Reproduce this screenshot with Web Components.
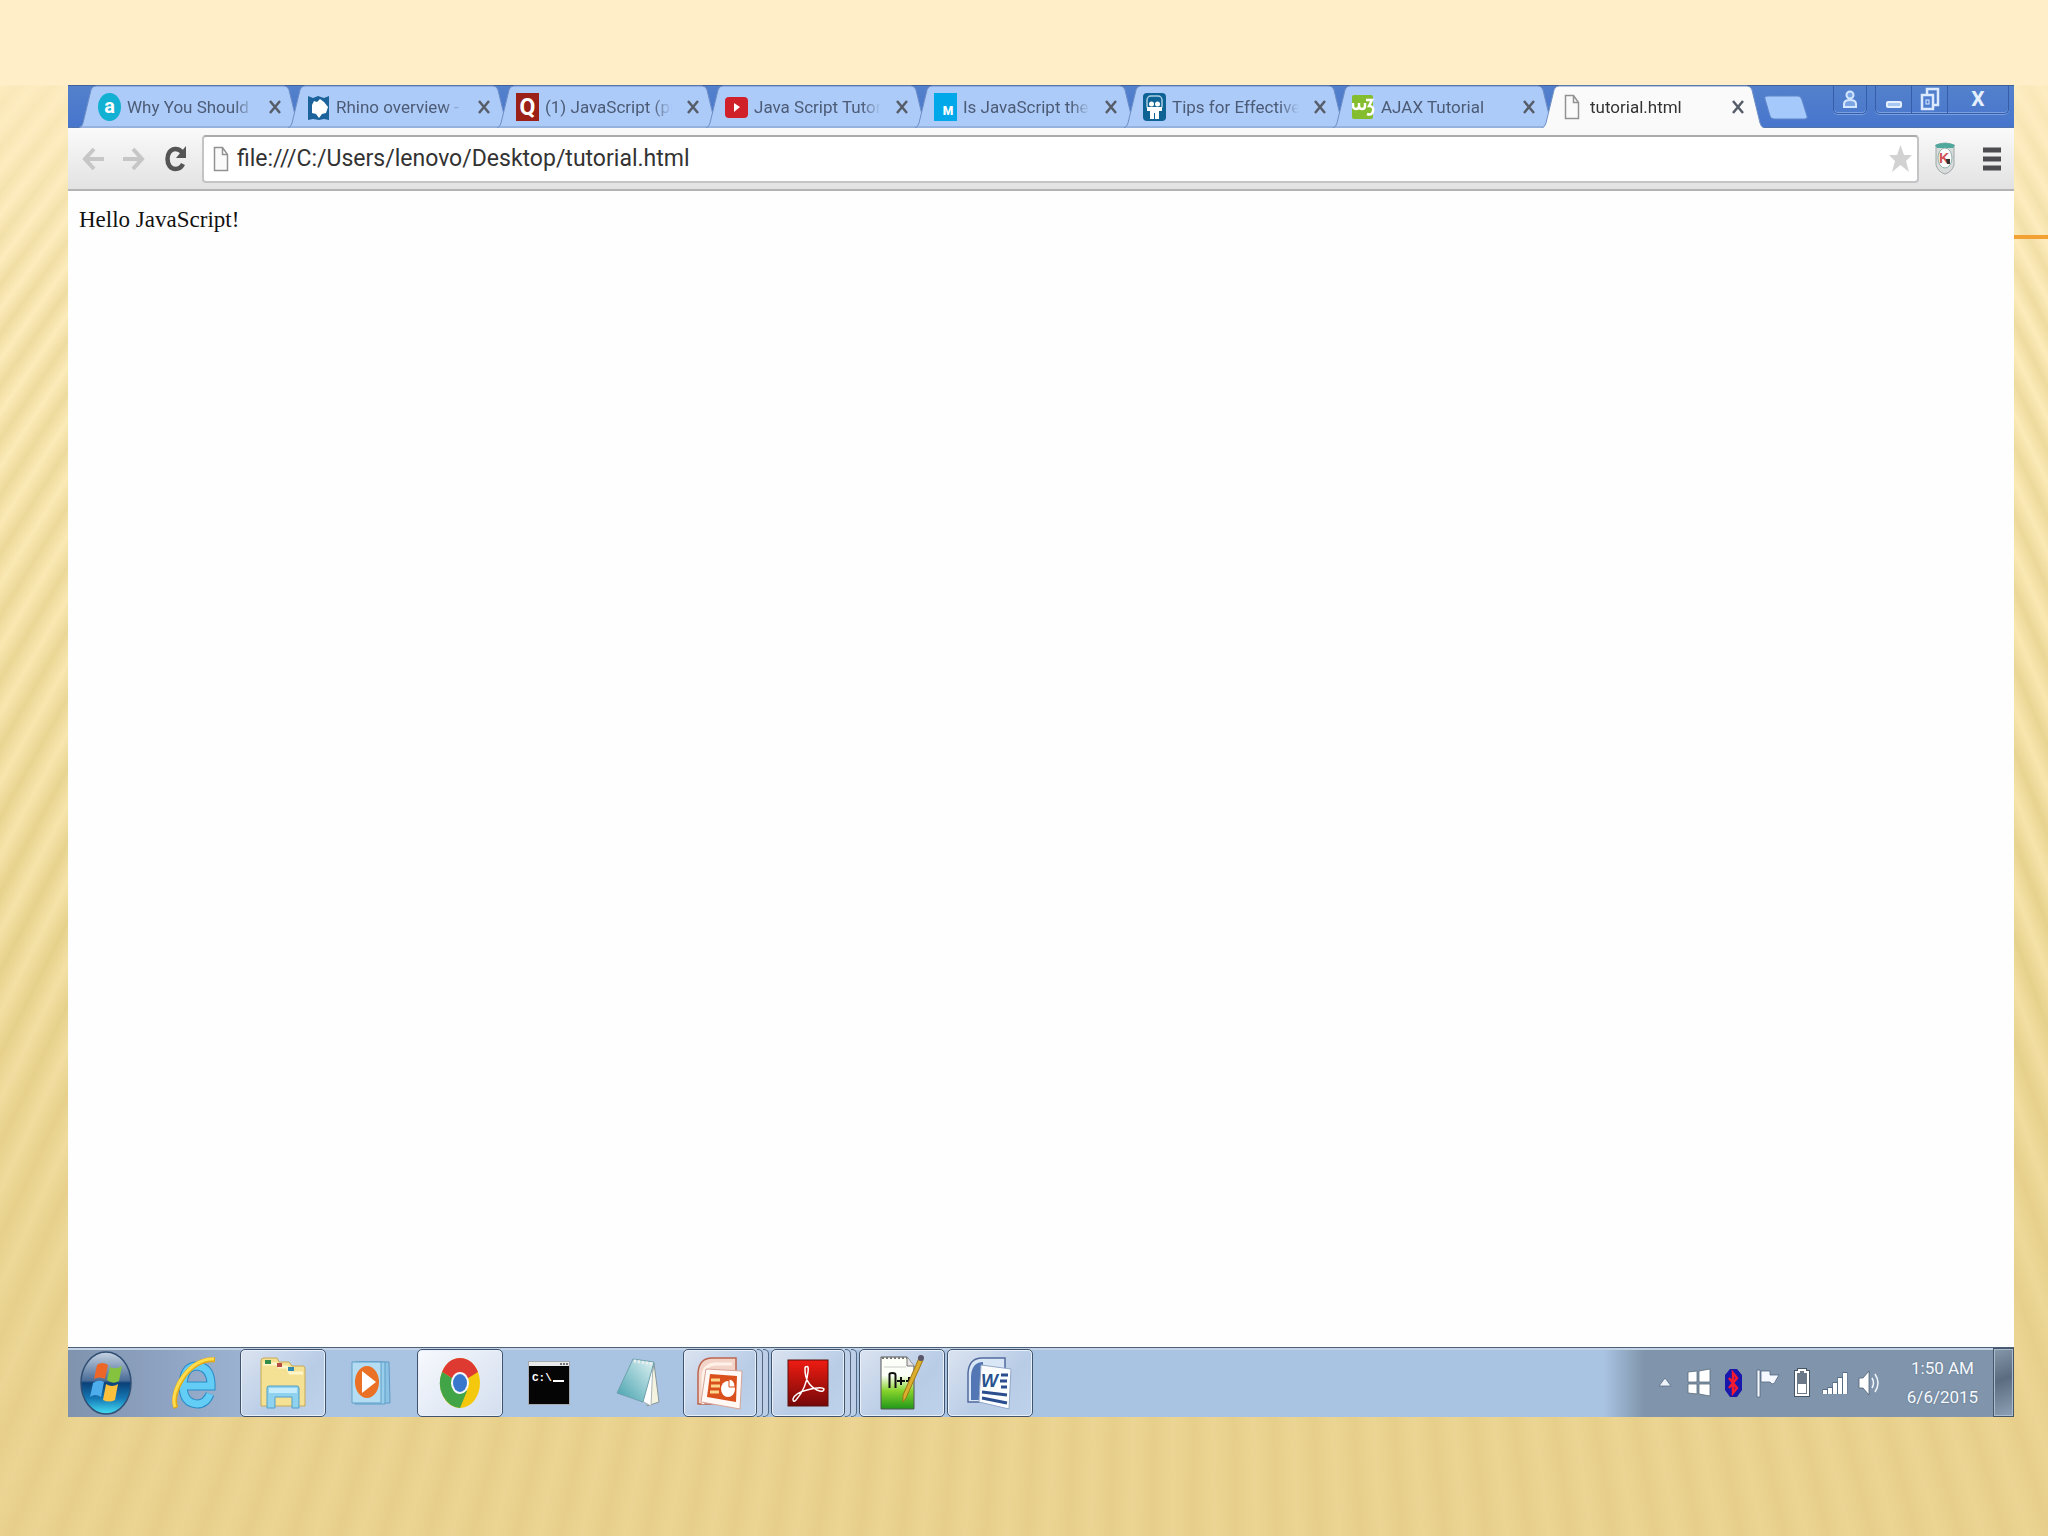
<!DOCTYPE html>
<html lang="en">
<head>
<meta charset="utf-8">
<title>tutorial.html</title>
<style>
  body {
    margin: 0;
    font-family: Roboto, "Liberation Sans", sans-serif;
  }
</style>
</head>
<body>
<slide-page>
  <browser-window>
    <browser-tab slot="tabs" icon="about">Why You Should</browser-tab>
    <browser-tab slot="tabs" icon="rhino">Rhino overview -</browser-tab>
    <browser-tab slot="tabs" icon="quora">(1) JavaScript (pro</browser-tab>
    <browser-tab slot="tabs" icon="youtube">Java Script Tutoria</browser-tab>
    <browser-tab slot="tabs" icon="medium">Is JavaScript the F</browser-tab>
    <browser-tab slot="tabs" icon="slideshare">Tips for Effective</browser-tab>
    <browser-tab slot="tabs" icon="w3">AJAX Tutorial</browser-tab>
    <browser-tab slot="tabs" icon="page" active>tutorial.html</browser-tab>
    Hello JavaScript!
  </browser-window>
  <task-bar>
    <task-item icon="ie" label="Internet Explorer"></task-item>
    <task-item icon="explorer" label="Windows Explorer" running></task-item>
    <task-item icon="player" label="Media Player"></task-item>
    <task-item icon="chrome" label="Chrome" running></task-item>
    <task-item icon="cmd" label="Command Prompt"></task-item>
    <task-item icon="notepad" label="Notepad"></task-item>
    <task-item icon="powerpoint" label="PowerPoint" running stacked></task-item>
    <task-item icon="reader" label="Reader" running stacked></task-item>
    <task-item icon="npp" label="Notepad++" running></task-item>
    <task-item icon="word" label="Word" running></task-item>
    <app-icon slot="tray" name="chevron"></app-icon>
    <app-icon slot="tray" name="windows"></app-icon>
    <app-icon slot="tray" name="bluetooth"></app-icon>
    <app-icon slot="tray" name="flag"></app-icon>
    <app-icon slot="tray" name="battery"></app-icon>
    <app-icon slot="tray" name="signal"></app-icon>
    <app-icon slot="tray" name="speaker"></app-icon>
  </task-bar>
</slide-page>

<script>
// name: [width, height, markup]
const ICONS = {
  about: [23, 28, `
    <ellipse cx="11.5" cy="14" rx="11.5" ry="14" fill="#12b0d2"/>
    <text x="11.5" y="20" text-anchor="middle" font-size="20" font-weight="700" fill="#fff">a</text>`],
  rhino: [23, 28, `
    <path d="M1 3l5 2 5-2 6 2 5-2v24l-5-1-5 1-6-1-5 1z" fill="#1c639c"/>
    <path d="M5 12l2-4 3 1 3-3 4 3 4 5-2 6-4 1-3 4-3-4-4-1z" fill="#fff"/>`],
  quora: [23, 28, `
    <rect width="23" height="28" fill="#9b2118"/>
    <text x="11.5" y="22" text-anchor="middle" font-size="23" font-weight="700" fill="#fff">Q</text>`],
  youtube: [23, 28, `
    <rect y="4" width="23" height="21" rx="4" fill="#d0202a"/>
    <path d="M9 10l6 4-6 5z" fill="#fff"/>`],
  medium: [23, 28, `
    <rect width="23" height="28" fill="#00a8ea"/>
    <text x="14" y="22" text-anchor="middle" font-size="12" font-weight="900" fill="#fff">M</text>`],
  slideshare: [23, 28, `
    <rect width="23" height="28" rx="4" fill="#0d6394"/>
    <rect x="4" y="3" width="15" height="14" rx="4" fill="none" stroke="#a9cfe4" stroke-width="1.5"/>
    <circle cx="8.5" cy="11" r="2.5" fill="#fff"/><circle cx="14.5" cy="11" r="2.5" fill="#fff"/>
    <path d="M4 14h15v4h-3v8h-4v-6h-1v6H7v-8H4z" fill="#fff"/>`],
  w3: [23, 28, `
    <rect y="2" width="21" height="24" rx="2" fill="#84bd2e"/>
    <path d="M1 10v3q0 3 3 3t3-3v-3 3q0 3 3 3t3-3v-3M14 7h6l-3 6q5 0 4 5t-6 3" fill="none" stroke="#fff" stroke-width="2.5"/>`],
  page: [23, 28, `
    <path d="M4.500 2.500h8l5 7v16h-13zM12.500 2.500v7h5" fill="#fafafa" stroke="#929292" stroke-width="1.5"/>`],
  back: [22, 24, `<path d="M12 2L3 12l9 10M3 12h19" fill="none" stroke="#c6c6c6" stroke-width="4"/>`],
  forward: [22, 24, `<path d="M10 2l9 10-9 10M19 12H0" fill="none" stroke="#c6c6c6" stroke-width="4"/>`],
  reload: [24, 28, `
    <path d="M18.500 7.500Q15.500 4 11.500 4C6.500 4 3.500 8.500 3.500 14s3 10 8 10q5 0 7.500-5" fill="none" stroke="#555" stroke-width="4.5"/>
    <path d="M22 1v12H12z" fill="#555"/>`],
  star: [25, 30, `<path d="M12.500 1l3.500 10h8l-6 6 3 11-8.500-7L4 28l3-11-6-6h8z" fill="#d2d2d2"/>`],
  shield: [22, 33, `
    <path d="M2 3q9-4 18 0v20q-2 7-9 9-7-2-9-9z" fill="#dadcdc" stroke="#9da7a7"/>
    <path d="M1 3q10-4 20 0l-2 3H3z" fill="#4ea99c"/>
    <ellipse cx="11" cy="16" rx="7" ry="10" fill="#fafafa" stroke="#8fb2ad"/>
    <text x="10" y="21" text-anchor="middle" font-size="14" font-weight="700" fill="#d05053">K</text>
    <path d="M12 17h4v5h-3z" fill="#333"/>`],
  menu: [20, 24, `<path d="M1 3h18M1 12h18M1 21h18" stroke="#4c4c50" stroke-width="5"/>`],
  user: [16, 19, `
    <circle cx="8" cy="5" r="3.5" fill="#7ba4e4" stroke="#d5e7ff" stroke-width="2"/>
    <path d="M2 17v-3q0-4 6-4t6 4v3z" fill="#7ba4e4" stroke="#d5e7ff" stroke-width="2"/>`],
  minimize: [18, 19, `<rect x="2" y="12" width="14" height="5" rx="1" fill="#a8c8f4" stroke="#e3efff" stroke-width="2"/>`],
  restore: [20, 24, `
    <path d="M7 7V2h11v16h-5" fill="none" stroke="#dceaff" stroke-width="2.5"/>
    <rect x="2" y="8" width="11" height="14" fill="#4f7fd0" stroke="#dceaff" stroke-width="2.5"/>
    <rect x="6" y="13" width="3" height="4" fill="none" stroke="#dceaff"/>`],
  start: [52, 64, `
    <defs>
      <linearGradient id="orb" x2="0" y2="1"><stop stop-color="#c7d3e2"/><stop offset=".46" stop-color="#4a6c97"/><stop offset=".5" stop-color="#0b4178"/><stop offset=".75" stop-color="#1579b6"/><stop offset="1" stop-color="#45e0f6"/></linearGradient>
    </defs>
    <ellipse cx="26" cy="32" rx="25" ry="31" fill="url(#orb)" stroke="#304f73" stroke-width="1.5"/>
    <path d="M17 14q5-4 11 0l-3 14q-6-3-11 0z" fill="#ec6628"/>
    <path d="M30 16q6 3 12-1l-3 15q-6 4-12-1z" fill="#85c33e"/>
    <path d="M13 32q6-4 11-1l-3 15q-6-4-11 0z" fill="#4cacec"/>
    <path d="M26 33q6 4 12 0l-3 16q-6 3-12 0z" fill="#fbc13d"/>`],
  ie: [46, 56, `
    <path d="M38 39Q34 49 25 49 11 48 11 30 12 11 25 11 38 12 39 28L39 31H14" fill="none" stroke="#288bc7" stroke-width="9"/>
    <path d="M38 39Q34 49 25 49 11 48 11 30 12 11 25 11 38 12 39 28L39 31H14" fill="none" stroke="#64cdf5" stroke-width="7"/>
    <path d="M4 53C-3 38 17 2 43 5" fill="none" stroke="#e3aa17" stroke-width="5"/>
    <path d="M3 52C-3 36 18 2 42 4" fill="none" stroke="#ffdc4c" stroke-width="3"/>`],
  explorer: [46, 52, `
    <path d="M1 49V4q0-3 3-3h13l2 4h10l3 4h11q2 0 2 3v37z" fill="#f4e193" stroke="#c8a956"/>
    <path d="M3 7h14l2 3h8l3 6h13" fill="none" stroke="#fff5ca" stroke-width="3"/>
    <path d="M5 3h6v4H5z" fill="#358c48"/><path d="M17 6h5v4h-5z" fill="#b54b44"/><path d="M28 10h6v4h-6z" fill="#2f8aad"/>
    <path d="M7 51V31q0-2 2-2h28q2 0 2 2v20h-7V40H15v11z" fill="#8ed2ef" stroke="#519fc7"/>
    <path d="M9 31h28v5H9z" fill="#c4ecfa"/>`],
  player: [42, 48, `
    <path d="M8 3h30l1 41H8z" fill="#8cc3e5" stroke="#6099c4"/>
    <path d="M4 3h30v42H4z" fill="#98cdec" stroke="#5f9fc7"/>
    <path d="M1 3h29v41H1z" fill="#b4dcf2" stroke="#5f9fc7"/>
    <ellipse cx="16" cy="23" rx="12" ry="16" fill="#ea7025"/>
    <path d="M11 12l14 11-14 11z" fill="#fff"/>`],
  chrome: [42, 52, `
    <ellipse cx="21" cy="26" rx="20" ry="25" fill="#f4c80d"/>
    <path d="M21 26L3 15Q9 1 21 1t18 14z" fill="#df3a32"/>
    <path d="M21 26L3 15Q-2 28 4 39q6 11 17 12l7-17z" fill="#41a446"/>
    <ellipse cx="21" cy="26" rx="9" ry="11" fill="#f4f7fa"/>
    <ellipse cx="21" cy="26" rx="7" ry="9" fill="#3877cb"/>`],
  cmd: [42, 44, `
    <rect width="42" height="44" fill="#a6a9ad"/>
    <rect x="1" y="1" width="40" height="4" fill="#e9e9e9"/><path d="M32 3h8" stroke="#777" stroke-width="2" stroke-dasharray="2 1"/>
    <rect x="1" y="5" width="40" height="38" fill="#050505"/>
    <text x="4" y="20" font-family="Liberation Mono" font-size="11" font-weight="700" fill="#fff">C:\\</text>
    <path d="M25 20h11" stroke="#fff" stroke-width="2"/>`],
  notepad: [44, 50, `
    <defs><linearGradient id="note" x1="1" x2="0" y2="1"><stop stop-color="#e0f3f4"/><stop offset="1" stop-color="#429fac"/></linearGradient></defs>
    <path d="M38 5l5 39-12 4z" fill="#f4f3df" stroke="#87969a"/>
    <path d="M37 5l-2 43-9-5z" fill="#fff" stroke="#a9b7b9"/>
    <path d="M17 1l21 3-11 40L1 35z" fill="url(#note)" stroke="#6fa1ad"/>
    <path d="M18 3l19 3" stroke="#eee" stroke-width="3" stroke-dasharray="2 2"/>`],
  powerpoint: [46, 54, `
    <path d="M1 48V17Q2 2 15 2h24v46z" fill="#f3d4c8" stroke="#bc634d" stroke-width="1.5"/>
    <path d="M6 48V20Q7 8 19 8h16" fill="none" stroke="#fff1e8" stroke-width="3"/>
    <path d="M9 13l36 2-2 38-39-7z" fill="#fff8f4" stroke="#d6a598"/>
    <path d="M13 18l27 2-1 26-29-5z" fill="#d9501d"/>
    <path d="M14 24h9M14 30h9M13 36h9" stroke="#ffd48b" stroke-width="3"/>
    <ellipse cx="31" cy="33" rx="7" ry="8" fill="#fff"/><path d="M32 31v-8q6 1 6 8z" fill="#fff" stroke="#d9501d"/>`],
  reader: [42, 48, `
    <defs><linearGradient id="pdf" x2="0" y2="1"><stop stop-color="#ef1c12"/><stop offset="1" stop-color="#750808"/></linearGradient></defs>
    <rect x="1" y="1" width="40" height="46" fill="url(#pdf)" stroke="#57100d"/>
    <path d="M19 8q3-2 2 5c-1 10-4 19-12 28q-3 3-3-1 2-6 14-9 15-4 17-1 0 4-7 1-12-6-12-21 0-3 1-2z" fill="none" stroke="#fff" stroke-width="1.5"/>`],
  npp: [44, 56, `
    <defs><linearGradient id="npg" x2="0" y2="1"><stop offset=".35" stop-color="#fcfff7"/><stop offset=".65" stop-color="#87d32c"/><stop offset="1" stop-color="#209719"/></linearGradient></defs>
    <path d="M1 2h26l7 9v43H1z" fill="url(#npg)" stroke="#555"/>
    <path d="M2 3h25" stroke="#777" stroke-width="2" stroke-dasharray="2 2"/>
    <path d="M4 12h22" stroke="#ccc"/><path d="M27 2v9h7" fill="#e4e4e4" stroke="#777"/>
    <path d="M9.500 33V19q0-1 3-1t3 2v13M21 22v8M17 26h8M29 22v8M26 26h7" fill="none" stroke="#111" stroke-width="2"/>
    <path d="M39 3l4 2-17 38-3 4 0-7z" fill="#dcae2d" stroke="#9d7619"/>
    <circle cx="41" cy="3" r="3" fill="#59556b"/>`],
  word: [46, 54, `
    <path d="M1 46V17Q2 2 15 2h23v44z" fill="#d9e6f6" stroke="#526a9d" stroke-width="1.5"/>
    <path d="M4 44V20Q5 6 16 6v25l-4 13z" fill="#5377b4"/>
    <path d="M14 9l30 4-2 40-30-7z" fill="#fbfdff" stroke="#94a8c9"/>
    <text x="14" y="31" font-size="18" font-weight="700" font-style="italic" fill="#28518f">W</text>
    <path d="M34 19h7M33 25h7M34 31h6M15 36l25 3M15 42l25 5" stroke="#294d8d" stroke-width="3"/>`],
  chevron: [34, 32, `<path d="M11 19l6-8 6 8z" fill="#eef3f8" stroke="#566d88" stroke-width=".8"/>`],
  windows: [34, 32, `<path d="M6 5l9-1v11H6zM17 4l11-2v13H17zM6 17h9v10l-9-1zM17 17h11v12l-11-2z" fill="#fff" stroke="#59697c" stroke-width=".8"/>`],
  bluetooth: [34, 32, `
    <path d="M14 2h7l5 6v15l-5 7h-7l-5-7V8z" fill="#1818ac"/>
    <path d="M13 11l8 10-4 5V6l4 5-8 10" fill="none" stroke="#f31a31" stroke-width="2.5"/>`],
  flag: [34, 32, `
    <path d="M7 3h3v27H7z" fill="#f5f9ff" stroke="#50657d" stroke-width=".8"/>
    <path d="M11 4h9v4h9l-3 5q-1 4-4 4l-2-2h-9z" fill="#f5f9ff" stroke="#50657d" stroke-width=".8"/>`],
  battery: [34, 32, `
    <path d="M15 5V3h6v2h3v23H12V5z" fill="#6a7887" stroke="#465564" stroke-width="4"/>
    <path d="M15 5V3h6v2h3v23H12V5z" fill="#6a7887" stroke="#fff" stroke-width="2"/>
    <path d="M14 17h8v9h-8z" fill="#fff"/>`],
  signal: [34, 32, `<path d="M7 27v-5M12 27v-7M17 27V15M22 27V10M27 27V5" stroke="#576d85" stroke-width="5"/><path d="M7 27v-4M12 27v-6M17 27V16M22 27V11M27 27V6" stroke="#fff" stroke-width="4"/>`],
  speaker: [34, 32, `
    <path d="M7 11h4l6-7v24l-6-7H7z" fill="#fff" stroke="#4c6076" stroke-width=".8"/>
    <path d="M20 11q3 5 0 10M23 7q6 9 0 18" fill="none" stroke="#f0f6fc" stroke-width="1.5"/>`],
};

class AppIcon extends HTMLElement {
  connectedCallback() {
    const [width, height, markup] = ICONS[this.getAttribute('name')];
    this.attachShadow({ mode: 'open' }).innerHTML = `
      <style>
        :host { display: block; flex: none; }
        svg { display: block; }
      </style>
      <svg width="${width}" height="${height}" viewBox="0 0 ${width} ${height}" aria-hidden="true">${markup}</svg>
    `;
  }
}
customElements.define('app-icon', AppIcon);

class SlidePage extends HTMLElement {
  constructor() {
    super();
    this.attachShadow({ mode: 'open' }).innerHTML = `
      <style>
        :host {
          display: grid;
          grid-template-columns: 68px 1fr 34px;
          box-sizing: border-box;
          min-height: 100vh;
          padding: 85px 0 119px;
          background:
            linear-gradient(#ffeec8 85px, #fdecc0cc 86px, #fbe9b840 300px, #f0dc9a20 900px, #e8d08cb0 1400px),
            repeating-conic-gradient(from 90deg at 58% -1300px, #dfca8099 0deg, #ffeebc80 .42deg, #dfca8099 .84deg),
            linear-gradient(#ffeec8 85px, #fae8b4 450px, #edd896 950px, #e8d08c);
        }
        main {
          grid-column: 2;
          display: flex;
          flex-direction: column;
          min-width: 0;
        }
        hr {
          align-self: start;
          width: 100%;
          height: 4px;
          margin: 150px 0 0;
          border: 0;
          background: #f2a132;
        }
      </style>
      <main><slot></slot></main>
      <hr>
    `;
  }
}
customElements.define('slide-page', SlidePage);

class BrowserTab extends HTMLElement {
  connectedCallback() {
    const active = this.hasAttribute('active');
    this.attachShadow({ mode: 'open' }).innerHTML = `
      <style>
        :host {
          position: relative;
          display: flex;
          align-items: center;
          flex: 0 1 222px;
          box-sizing: border-box;
          min-width: 0;
          height: 43px;
          padding: 0 17px 0 19px;
          margin-right: -13px;
          color: #4c5b76;
          font-size: 17px;
          line-height: 24px;
        }
        :host([active]) { z-index: 1; color: #333; }
        .shape {
          position: absolute;
          inset: 0;
          width: 100%;
          height: 100%;
        }
        app-icon, .title, button { position: relative; }
        .title {
          flex: 1;
          min-width: 0;
          margin: 0 12px 0 6px;
          overflow: hidden;
          white-space: nowrap;
          -webkit-mask: linear-gradient(90deg, #000 85%, transparent);
          mask: linear-gradient(90deg, #000 85%, transparent);
        }
        button {
          flex: none;
          width: 18px;
          height: 24px;
          padding: 0;
          border: 0;
          background: none;
        }
        button svg { display: block; margin: auto; }
      </style>
      <svg class="shape" viewBox="0 0 222 43" preserveAspectRatio="none">
        <path d="M0 43Q3 42 4 38L12 5Q13 1 17 1H205Q209 1 210 5L218 38Q219 42 222 43z" fill="${active ? '#fafafb' : '#adcbf8'}"/>
        <path d="M0 43Q3 42 4 38L12 5Q13 1 17 1H205Q209 1 210 5L218 38Q219 42 222 43" fill="none" stroke="${active ? '#7292c4' : '#6e8fc6'}"/>
        ${active ? '' : '<path d="M1 42H221" stroke="#7f9ac6"/>'}
      </svg>
      <app-icon name="${this.getAttribute('icon')}"></app-icon>
      <span class="title"><slot></slot></span>
      <button aria-label="Close tab"><svg width="12" height="14" viewBox="0 0 12 14"><path d="M1 1l10 12M11 1L1 13" stroke="#565d69" stroke-width="2.5"/></svg></button>
    `;
  }
}
customElements.define('browser-tab', BrowserTab);

class BrowserWindow extends HTMLElement {
  constructor() {
    super();
    this.attachShadow({ mode: 'open' }).innerHTML = `
      <style>
        :host {
          display: flex;
          flex: 1;
          flex-direction: column;
          background: #fefefe;
        }
        button {
          display: flex;
          align-items: center;
          justify-content: center;
          padding: 0;
          border: 0;
          background: none;
        }
        .strip {
          display: flex;
          height: 43px;
          padding-left: 11px;
          background: linear-gradient(#5481cb, #4775cd);
          box-shadow: inset 0 1px #40609b, inset 0 -1px #5274ab;
        }
        .tabs { display: flex; flex: 0 1 1685px; min-width: 0; }
        .new {
          flex: none;
          width: 44px;
          height: 25px;
          margin-top: 10px;
        }
        .user, .controls {
          display: flex;
          flex: none;
          box-sizing: border-box;
          height: 29px;
          border: 1px solid #355da8;
          border-top: 0;
          border-radius: 0 0 5px 5px;
          box-shadow: inset 0 -1px #7ba0e2, 0 1px #7ba0e2;
        }
        .user { width: 34px; margin: 0 8px 0 auto; }
        .controls { margin-right: 5px; }
        .controls button { width: 36px; border-right: 1px solid #355da8; }
        .controls .close {
          width: 60px;
          border: 0;
          color: #e5f0ff;
          font: 700 21px Roboto, sans-serif;
        }
        .bar {
          display: flex;
          align-items: center;
          box-sizing: border-box;
          height: 63px;
          padding: 0 12px 0 14px;
          border-bottom: 2px solid #b3b3b5;
          background: linear-gradient(#fafafb, #e2e2e3);
        }
        .nav { display: flex; gap: 19px; margin-right: 14px; }
        .address {
          display: flex;
          align-items: center;
          flex: 1;
          box-sizing: border-box;
          height: 48px;
          padding: 0 4px 0 6px;
          border: 2px solid #c4c4c6;
          border-top-color: #aaaaac;
          border-radius: 4px;
          background: #fff;
        }
        input {
          flex: 1;
          min-width: 0;
          padding: 0;
          margin-left: 4px;
          border: 0;
          outline: 0;
          background: none;
          color: #333;
          font: 23px Roboto, "Liberation Sans", sans-serif;
        }
        .shield { margin-left: 15px; }
        .menu { margin-left: 26px; }
        article {
          flex: 1;
          padding: 14px 11px;
          color: #111;
          font: 23px/30px "Liberation Serif", serif;
        }
      </style>
      <div class="strip">
        <div class="tabs"><slot name="tabs"></slot></div>
        <button class="new" aria-label="New tab">
          <svg width="44" height="25"><path d="M4 1h30q3 0 4 4l5 16q1 3-2 3H10q-3 0-4-3L1 4q-1-3 3-3z" fill="#a5c9fa" stroke="#5e86cc"/></svg>
        </button>
        <button class="user" aria-label="User"><app-icon name="user"></app-icon></button>
        <div class="controls">
          <button aria-label="Minimize"><app-icon name="minimize"></app-icon></button>
          <button aria-label="Restore"><app-icon name="restore"></app-icon></button>
          <button class="close">X</button>
        </div>
      </div>
      <div class="bar">
        <div class="nav">
          <button aria-label="Back"><app-icon name="back"></app-icon></button>
          <button aria-label="Forward"><app-icon name="forward"></app-icon></button>
          <button aria-label="Reload"><app-icon name="reload"></app-icon></button>
        </div>
        <div class="address">
          <app-icon name="page"></app-icon>
          <input aria-label="Address" value="file:///C:/Users/lenovo/Desktop/tutorial.html">
          <button aria-label="Bookmark"><app-icon name="star"></app-icon></button>
        </div>
        <button class="shield" aria-label="Protection"><app-icon name="shield"></app-icon></button>
        <button class="menu" aria-label="Menu"><app-icon name="menu"></app-icon></button>
      </div>
      <article><slot></slot></article>
    `;
  }
}
customElements.define('browser-window', BrowserWindow);

class TaskItem extends HTMLElement {
  connectedCallback() {
    this.attachShadow({ mode: 'open' }).innerHTML = `
      <style>
        :host { display: flex; flex: none; width: 87px; height: 68px; }
        :host([running]) { width: 86px; }
        button {
          display: flex;
          align-items: center;
          justify-content: center;
          box-sizing: border-box;
          flex: 1;
          padding: 0;
          border: 0;
          background: none;
        }
        :host([running]) button {
          border: 1px solid #41536d;
          border-radius: 5px;
          background: linear-gradient(135deg, #dbe3f0, #b8cce6 60%, #bfd2ec);
          box-shadow: inset 0 0 0 1px #e8f1fb;
        }
        :host([icon="chrome"]) button { background: linear-gradient(135deg, #f7f9fd, #d3deef); }
        i {
          flex: none;
          width: 5px;
          border: 1px solid #526985;
          border-left: 0;
          border-radius: 0 5px 5px 0;
          background: #bccfe6;
        }
      </style>
      <button aria-label="${this.getAttribute('label')}"><app-icon name="${this.getAttribute('icon')}"></app-icon></button>
      ${this.hasAttribute('stacked') ? '<i></i><i></i>' : ''}
    `;
  }
}
customElements.define('task-item', TaskItem);

class TaskBar extends HTMLElement {
  constructor() {
    super();
    this.attachShadow({ mode: 'open' }).innerHTML = `
      <style>
        :host {
          display: flex;
          align-items: center;
          box-sizing: border-box;
          height: 70px;
          border-top: 1px solid #4c6078;
          background:
            linear-gradient(90deg, #7f93ae, #8da2c0 90px, #a9c3e200 260px),
            linear-gradient(270deg, #8095ab 370px, #a9c3e200 410px),
            #a9c3e2;
          box-shadow: inset 0 2px #c3d3e5;
        }
        button { padding: 0; border: 0; background: none; }
        .start {
          display: flex;
          justify-content: center;
          flex: none;
          width: 76px;
          margin-right: 7px;
        }
        .items { display: flex; gap: 2px; }
        .tray { display: flex; margin-left: auto; }
        time {
          flex: none;
          box-sizing: border-box;
          width: 107px;
          padding-left: 6px;
          color: #f6f9fd;
          font-size: 17px;
          line-height: 29px;
          text-align: center;
          text-shadow: 0 0 2px #566d87;
        }
        .show {
          box-sizing: border-box;
          align-self: stretch;
          flex: none;
          width: 21px;
          border: 1px solid #45566a;
          background: linear-gradient(160deg, #8697aa, #5b6c80 45%, #8ea0b5);
          box-shadow: inset 0 0 0 1px #a9bccd;
        }
      </style>
      <button class="start" aria-label="Start"><app-icon name="start"></app-icon></button>
      <div class="items"><slot></slot></div>
      <div class="tray"><slot name="tray"></slot></div>
      <time datetime="2015-06-06T01:50">1:50 AM<br>6/6/2015</time>
      <button class="show" aria-label="Show desktop"></button>
    `;
  }
}
customElements.define('task-bar', TaskBar);
</script>
</body>
</html>
